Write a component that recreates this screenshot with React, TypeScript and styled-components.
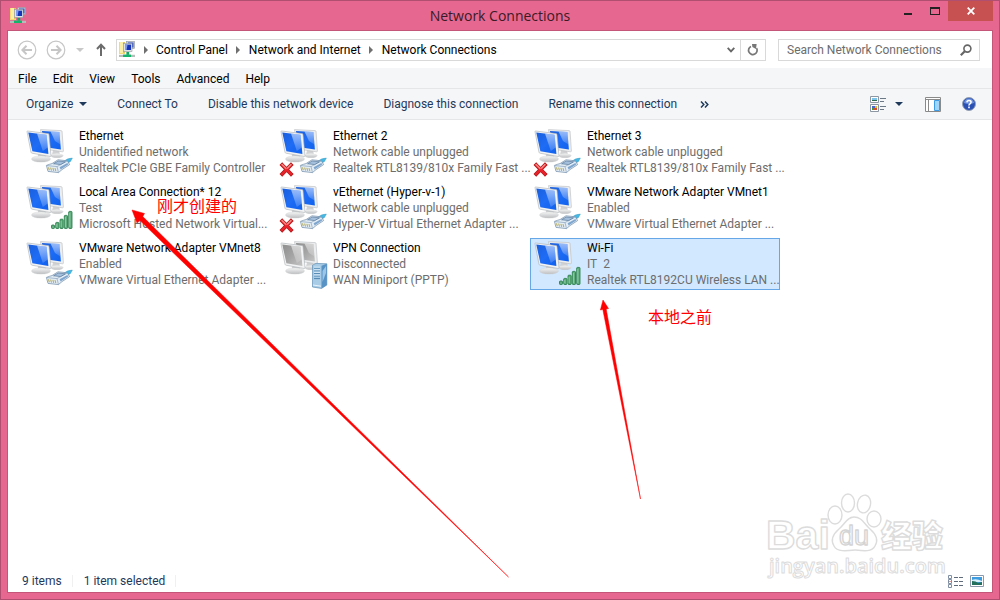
import React from "react";
import styled, { createGlobalStyle } from "styled-components";

const GlobalStyle = createGlobalStyle`
  *, *::before, *::after { box-sizing: border-box; }
  body {
    margin: 0;
    background: #e66790;
    font-family: Roboto, "Noto Sans CJK SC", sans-serif;
    font-size: 12px;
    line-height: 16px;
    color: #000;
  }
  button, input { font: inherit; color: inherit; }
  svg { display: block; flex: none; }
`;

const Frame = styled.div`
  display: flex;
  flex-direction: column;
  min-height: 100vh;
  padding: 0 6px 6px;
  background: #e66790;
  border: 1px solid #b04f70;
`;

const TitleBar = styled.header`
  display: grid;
  grid-template-columns: 1fr auto 1fr;
  align-items: center;
  height: 29px;
`;

const TitleIcon = styled.span`
  padding-left: 3px;
`;

const Title = styled.h1`
  margin: 0;
  font-family: "Open Sans", sans-serif;
  font-size: 14px;
  font-weight: 400;
  line-height: 20px;
  color: #3a1a25;
`;

const WindowControls = styled.div`
  display: flex;
  justify-content: flex-end;
  align-self: start;
`;

const ControlButton = styled.button<{ $close?: boolean }>`
  display: flex;
  align-items: center;
  justify-content: center;
  width: ${(p) => (p.$close ? 45 : 27)}px;
  height: 20px;
  padding: 0;
  border: 0;
  background: ${(p) => (p.$close ? "#c75050" : "transparent")};
`;

const Client = styled.main`
  flex: 1;
  display: flex;
  flex-direction: column;
  border: 1px solid #c4567a;
  background: #fff;
`;

const NavRow = styled.div`
  display: flex;
  align-items: center;
  height: 37px;
  padding: 0 12px 0 8px;
`;

const IconButton = styled.button<{ $width?: number }>`
  display: flex;
  align-items: center;
  justify-content: center;
  width: ${(p) => p.$width ?? 22}px;
  height: 20px;
  flex: none;
  padding: 0;
  border: 0;
  background: none;
`;

const HistoryButtons = styled.div`
  display: flex;
  align-items: center;
  width: 100px;
  flex: none;
`;

const AddressBar = styled.nav`
  flex: 1;
  display: flex;
  align-items: center;
  height: 22px;
  padding-left: 2px;
  border: 1px solid #d9d9d9;
`;

const Crumb = styled.button`
  padding: 0;
  border: 0;
  background: none;
  white-space: nowrap;
`;

const CrumbArrow = styled.span`
  display: flex;
  justify-content: center;
  width: 21px;
`;

const AddressTools = styled.div`
  display: flex;
  margin-left: auto;
`;

const RefreshCell = styled.div`
  border-left: 1px solid #d9d9d9;
`;

const SearchBox = styled.label`
  display: flex;
  align-items: center;
  width: 202px;
  height: 22px;
  margin-left: 12px;
  padding: 0 7px 0 8px;
  border: 1px solid #d9d9d9;
`;

const SearchInput = styled.input`
  flex: 1;
  min-width: 0;
  height: 18px;
  padding: 0;
  border: 0;
  outline: 0;
  background: none;
  &::placeholder { color: #6d6d6d; opacity: 1; }
`;

const MenuBar = styled.nav`
  display: flex;
  align-items: center;
  height: 21px;
  padding: 1px 0 0 2px;
  background: #f5f6f7;
  border-bottom: 1px solid #e5e6e7;
`;

const MenuButton = styled.button`
  padding: 0 8px;
  border: 0;
  background: none;
`;

const CommandBar = styled.div`
  display: flex;
  align-items: center;
  height: 31px;
  padding: 0 10px 0 3px;
  background: #f5f6f7;
  border-bottom: 1px solid #e5e6e7;
`;

const Command = styled.button`
  display: flex;
  align-items: center;
  gap: 6px;
  padding: 0 15px;
  border: 0;
  background: none;
  color: #1e395b;
  white-space: nowrap;
`;

const CommandViews = styled.div`
  display: flex;
  align-items: center;
  margin-left: auto;
`;

const Content = styled.section`
  position: relative;
  flex: 1;
  padding: 6px 14px;
`;

const ConnectionGrid = styled.ul`
  display: grid;
  grid-template-columns: repeat(auto-fill, 250px);
  gap: 4px;
  margin: 0;
  padding: 0;
  list-style: none;
`;

const ConnectionTile = styled.button<{ $selected?: boolean }>`
  display: flex;
  gap: 5px;
  width: 100%;
  height: 52px;
  padding: 0 0 0 1px;
  border: 1px solid ${(p) => (p.$selected ? "#66a7e8" : "transparent")};
  background: ${(p) => (p.$selected ? "#d1e8ff" : "transparent")};
  text-align: left;
`;

const TileText = styled.span`
  display: flex;
  flex-direction: column;
  padding-top: 1px;
  color: #6d6d6d;
  white-space: nowrap;
`;

const TileName = styled.span`
  color: #000;
`;

const Overlay = styled.svg`
  position: absolute;
  left: 0;
  top: 0;
  overflow: visible;
  pointer-events: none;
`;

const Note = styled.span<{ $x: number; $y: number }>`
  position: absolute;
  left: ${(p) => p.$x}px;
  top: ${(p) => p.$y}px;
  font-family: "Noto Sans CJK SC", sans-serif;
  font-size: 16px;
  line-height: 20px;
  color: #f00;
  pointer-events: none;
`;

const Watermark = styled.svg`
  position: absolute;
  right: 42px;
  bottom: -16px;
  pointer-events: none;
`;

const StatusBar = styled.footer`
  display: flex;
  align-items: center;
  height: 22px;
  padding: 0 4px 0 14px;
  color: #1e395b;
`;

const StatusText = styled.span`
  margin-right: 11px;
  padding-right: 10px;
  border-right: 1px solid #f0f0f0;
  line-height: 12px;
`;

const StatusViews = styled.div`
  display: flex;
  margin-left: auto;
`;

function NetworkFolderIcon() {
  return (
    <svg width="16" height="17" viewBox="0 0 16 17">
      <path d="M0 1h5l1 1v11H0z" fill="#f3dc78" />
      <path d="M1 1h3v11H1z" fill="#fbeea6" />
      <path d="M4 1h2v11H4z" fill="#e2c75e" />
      <rect x="7.5" y="0.5" width="8" height="7" fill="#c9cfd4" stroke="#8f979e" strokeWidth="0.6" />
      <rect x="9" y="1.5" width="5.5" height="5" fill="#3b57c9" />
      <rect x="4.5" y="2.5" width="8.5" height="8" fill="#dfe4e8" stroke="#8f979e" strokeWidth="0.6" />
      <rect x="6" y="3.6" width="6" height="5.4" fill="#1534b8" />
      <path d="M6 3.6h2.6L7.6 9H6z" fill="#7e9bf0" />
      <path d="M7.4 11h2.8v3H7.4z" fill="#16a564" />
      <path d="M0 13.8h16v2.2H0z" fill="#b4bdb9" />
      <path d="M4 13.6h8V16H4z" fill="#14b46c" />
    </svg>
  );
}

function CircleArrow({ forward }: { forward?: boolean }) {
  return (
    <svg width="20" height="20" viewBox="0 0 20 20" fill="none" stroke="#c6c6c6">
      <circle cx="10" cy="10" r="8.8" strokeWidth="1.2" />
      <g strokeWidth="2" transform={forward ? "rotate(180 10 10)" : undefined}>
        <path d="M5.5 10H15M9.5 5.8L5.4 10l4.1 4.2" />
      </g>
    </svg>
  );
}

function Caret({ color }: { color: string }) {
  return (
    <svg width="8" height="4" viewBox="0 0 8 4">
      <path d="M0 0h8L4 4z" fill={color} />
    </svg>
  );
}

function ConnectionIcon({ kind }: { kind: Kind }) {
  const grey = kind === "vpn";
  const id = grey ? "grey" : "blue";
  return (
    <svg width="50" height="50" viewBox="0 0 50 50" aria-hidden="true">
      <defs>
        <linearGradient id={`screen-${id}`} x1="0" y1="0" x2="1" y2="1">
          <stop offset="0" stopColor={grey ? "#8e8e8e" : "#1a5fdc"} />
          <stop offset="0.5" stopColor={grey ? "#a4a4a4" : "#1f6cf5"} />
          <stop offset="1" stopColor={grey ? "#c4c4c4" : "#0f62ee"} />
        </linearGradient>
        <linearGradient id={`glare-${id}`} x1="0" y1="0" x2="0" y2="1">
          <stop offset="0" stopColor="#fff" stopOpacity="0.55" />
          <stop offset="1" stopColor="#fff" stopOpacity="0.15" />
        </linearGradient>
        <linearGradient id={`stand-${id}`} x1="0" y1="0" x2="0" y2="1">
          <stop offset="0" stopColor="#f6f6f6" />
          <stop offset="1" stopColor="#bcbec0" />
        </linearGradient>
      </defs>
      <path d="M29 23h6l1 5h-8z" fill="#d0d2d4" />
      <ellipse cx="33" cy="28.6" rx="6.5" ry="2.2" fill={`url(#stand-${id})`} />
      <path d="M16.5 2.6L37 3.6Q38 3.7 38.1 4.6L39.4 24Q39.4 24.9 38.5 24.8L19.5 22z" fill="#eceeef" stroke="#b9bcbf" strokeWidth="0.6" />
      <path d="M18 3.9L35.4 4.9 36.9 22.4 20 20z" fill={`url(#screen-${id})`} />
      <path d="M26.5 4.4L35.4 4.9 36.5 17.5 31 14z" fill={`url(#glare-${id})`} />
      <path d="M14.5 27l7 1 1.5 4H13z" fill="#c9cbcd" />
      <ellipse cx="17" cy="32" rx="9.5" ry="3.1" fill={`url(#stand-${id})`} stroke="#d0d2d4" strokeWidth="0.4" />
      <path d="M3 4.6Q2.9 4 3.7 4L24 6.6Q24.9 6.7 25 7.5L27 28.8Q27 29.6 26.2 29.5L8 26.2Q7.2 26 7 25.3z" fill="#f2f3f4" stroke="#aaaeb1" strokeWidth="0.6" />
      <path d="M4.3 5.5L22.6 7.8 24.4 27 8.4 24.2z" fill={`url(#screen-${id})`} />
      <path d="M13 6.6L22.6 7.8 23.8 20.6 18.8 24z" fill={`url(#glare-${id})`} />
      {(kind === "cable" || kind === "unplugged") && <CableBadge />}
      {kind === "wireless" && <SignalBadge />}
      {kind === "vpn" && <ServerBadge />}
      {kind === "unplugged" && (
        <g fill="none">
          <path d="M4.2 38L13 47M13 38L4.2 47" stroke="#a81a1a" strokeWidth="3.8" strokeLinecap="square" />
          <path d="M4.2 38L13 47M13 38L4.2 47" stroke="#e8222a" strokeWidth="2.6" strokeLinecap="square" />
          <path d="M4 37.4L8 41.4M13 37.4L9.6 41" stroke="#f58a86" strokeWidth="1.4" strokeLinecap="round" />
        </g>
      )}
    </svg>
  );
}

function CableBadge() {
  return (
    <g strokeLinejoin="round">
      <path d="M39 35Q43 31 48.4 31L46.5 34.5Q43.5 36 42 38z" fill="#45b8e4" stroke="#3596c0" strokeWidth="0.4" />
      <path d="M22.4 38.4Q26 37 28 36.6L34 32.8 43.4 33.8 45.6 37.6 38 42.6 34.5 45.6 24 44.4z" fill="#e3edf6" stroke="#6d8aa6" strokeWidth="0.7" />
      <path d="M23 38.6L33 39.6 43.4 33.8M33 39.6L34.5 45.6" fill="none" stroke="#7a96b0" strokeWidth="0.6" />
      <path d="M29.5 36.8L34.2 34 41.4 34.8 36.6 37.6z" fill="#a3bfdc" stroke="#4a6c90" strokeWidth="0.6" />
      <path d="M35.6 40.2L43.4 36 44.2 37.6 36.6 42.6z" fill="#7fa6cf" />
      <path d="M24.5 40.4l.8 2.8M26.7 40.6l.8 3M28.9 40.9l.8 3M31 41.1l.8 3" stroke="#b3aa58" strokeWidth="1" />
    </g>
  );
}

function SignalBadge() {
  return (
    <g fill="#5fae7b" stroke="#1d7343" strokeWidth="0.8">
      <rect x="27.5" y="42" width="3" height="3.5" rx="0.8" />
      <rect x="31.7" y="39.4" width="3.2" height="6.1" rx="0.8" />
      <rect x="36" y="36.2" width="3.2" height="9.3" rx="0.8" />
      <rect x="40.3" y="32.4" width="3.2" height="13.1" rx="0.8" />
      <rect x="44.7" y="28.4" width="3.3" height="17.1" rx="0.8" />
      <path d="M45.8 30v14M41.4 34v10M37.1 38v6M32.8 41v3" stroke="#a5d8b6" strokeWidth="0.7" />
    </g>
  );
}

function ServerBadge() {
  return (
    <g strokeLinejoin="round">
      <path d="M34.5 26.2L38 24.4 48.8 24.8V46L43.5 49.4 34.5 48z" fill="#a8cbe6" stroke="#5f8fb4" strokeWidth="0.7" />
      <path d="M43.5 26.8L48.8 24.8V46L43.5 49.4z" fill="#5792c4" />
      <path d="M44.5 32L48 27v7l-3.5 9z" fill="#9cc6e6" />
      <path d="M36 29.2h6M36 31.8h6M36 34.4h6M36 37h6M36 39.6h6" stroke="#4f86b0" strokeWidth="1" />
      <path d="M36 28.2h6M36 30.8h6M36 33.4h6M36 36h6" stroke="#e6f3fc" strokeWidth="0.8" />
      <path d="M35 46l8 1.2" stroke="#e6f3fc" />
    </g>
  );
}

function PawWatermark() {
  return (
    <Watermark width="184" height="94" viewBox="0 0 184 94" role="img" aria-label="Baidu">
      <g fill="#fff" stroke="#dcdcdc" strokeWidth="1.4" strokeLinejoin="round">
        <text x="0" y="57" fontFamily="Liberation Sans, sans-serif" fontWeight="700" fontSize="41">Bai</text>
        <ellipse cx="69" cy="23" rx="7" ry="9" />
        <ellipse cx="82" cy="11" rx="6.5" ry="9" />
        <ellipse cx="98" cy="12" rx="6.5" ry="9" transform="rotate(12 98 12)" />
        <ellipse cx="108" cy="27" rx="7" ry="8" />
        <path d="M88 25C96 25 98 32 104 37C111 43 112 49 109 54C106 60 98 59 89 58C80 59 71 60 68 54C65 49 66 43 73 37C79 32 81 25 88 25z" />
        <text x="73" y="53" fontFamily="Liberation Sans, sans-serif" fontSize="27" stroke="#d4d4d4">du</text>
        <text x="115" y="55" fontFamily="Noto Sans CJK SC, sans-serif" fontWeight="900" fontSize="31">经验</text>
        <text x="3" y="81" fontFamily="Open Sans, sans-serif" fontSize="20" fontWeight="600" strokeWidth="1">jingyan.baidu.com</text>
      </g>
    </Watermark>
  );
}

type Kind = "cable" | "unplugged" | "wireless" | "vpn";

interface Connection {
  name: string;
  status: string;
  device: string;
  kind: Kind;
  selected?: boolean;
}

const connections: Connection[] = [
  { name: "Ethernet", status: "Unidentified network", device: "Realtek PCIe GBE Family Controller", kind: "cable" },
  { name: "Ethernet 2", status: "Network cable unplugged", device: "Realtek RTL8139/810x Family Fast ...", kind: "unplugged" },
  { name: "Ethernet 3", status: "Network cable unplugged", device: "Realtek RTL8139/810x Family Fast ...", kind: "unplugged" },
  { name: "Local Area Connection* 12", status: "Test", device: "Microsoft Hosted Network Virtual...", kind: "wireless" },
  { name: "vEthernet (Hyper-v-1)", status: "Network cable unplugged", device: "Hyper-V Virtual Ethernet Adapter ...", kind: "unplugged" },
  { name: "VMware Network Adapter VMnet1", status: "Enabled", device: "VMware Virtual Ethernet Adapter ...", kind: "cable" },
  { name: "VMware Network Adapter VMnet8", status: "Enabled", device: "VMware Virtual Ethernet Adapter ...", kind: "cable" },
  { name: "VPN Connection", status: "Disconnected", device: "WAN Miniport (PPTP)", kind: "vpn" },
  { name: "Wi-Fi", status: "IT\u00a0 2", device: "Realtek RTL8192CU Wireless LAN ...", kind: "wireless", selected: true },
];

const crumbs = ["Control Panel", "Network and Internet", "Network Connections"];
const menus = ["File", "Edit", "View", "Tools", "Advanced", "Help"];
const commands = ["Connect To", "Disable this network device", "Diagnose this connection", "Rename this connection"];

export default function App() {
  return (
    <>
      <GlobalStyle />
      <Frame>
        <TitleBar>
          <TitleIcon><NetworkFolderIcon /></TitleIcon>
          <Title>Network Connections</Title>
          <WindowControls>
            <ControlButton aria-label="Minimize">
              <svg width="10" height="10" viewBox="0 0 10 10"><path d="M1 7h8v2H1z" fill="#222" /></svg>
            </ControlButton>
            <ControlButton aria-label="Maximize">
              <svg width="10" height="8" viewBox="0 0 10 8"><path d="M0 0h10v8H0zM1 2v5h8V2z" fillRule="evenodd" fill="#222" /></svg>
            </ControlButton>
            <ControlButton $close aria-label="Close">
              <svg width="8" height="8" viewBox="0 0 8 8"><path d="M.7.7l6.6 6.6M7.3.7L.7 7.3" stroke="#fff" strokeWidth="1.8" /></svg>
            </ControlButton>
          </WindowControls>
        </TitleBar>
        <Client>
          <NavRow>
            <HistoryButtons>
              <IconButton aria-label="Back"><CircleArrow /></IconButton>
              <IconButton $width={36} aria-label="Forward"><CircleArrow forward /></IconButton>
              <IconButton $width={12} aria-label="Recent locations"><Caret color="#c8c8c8" /></IconButton>
              <IconButton $width={30} aria-label="Up">
                <svg width="10" height="13" viewBox="0 0 10 13"><path d="M5 13V2M1 6l4-4.2L9 6" fill="none" stroke="#6b6b6b" strokeWidth="2" /></svg>
              </IconButton>
            </HistoryButtons>
            <AddressBar aria-label="Address">
              <NetworkFolderIcon />
              {crumbs.map((crumb) => (
                <React.Fragment key={crumb}>
                  <CrumbArrow>
                    <svg width="4" height="8" viewBox="0 0 4 8"><path d="M0 0l4 4-4 4z" fill="#6f6f6f" /></svg>
                  </CrumbArrow>
                  <Crumb>{crumb}</Crumb>
                </React.Fragment>
              ))}
              <AddressTools>
                <IconButton $width={18} aria-label="Previous locations">
                  <svg width="8" height="6" viewBox="0 0 8 6"><path d="M.7.8L4 4.4 7.3.8" fill="none" stroke="#666" strokeWidth="1.8" /></svg>
                </IconButton>
                <RefreshCell>
                  <IconButton $width={24} aria-label="Refresh">
                    <svg width="12" height="12" viewBox="0 0 12 12">
                      <path d="M4 2.4A4.3 4.3 0 1 0 9.6 4.2" fill="none" stroke="#777" strokeWidth="1.7" />
                      <path d="M5 0l4.6 0-.6 5L5.4 3z" fill="#777" />
                    </svg>
                  </IconButton>
                </RefreshCell>
              </AddressTools>
            </AddressBar>
            <SearchBox>
              <SearchInput type="search" aria-label="Search" placeholder="Search Network Connections" />
              <svg width="12" height="12" viewBox="0 0 12 12" fill="none" stroke="#666">
                <circle cx="7.4" cy="4.6" r="3.5" strokeWidth="1.6" />
                <path d="M4.8 7.2L.8 11.2" strokeWidth="2.2" />
              </svg>
            </SearchBox>
          </NavRow>
          <MenuBar>
            {menus.map((menu) => <MenuButton key={menu}>{menu}</MenuButton>)}
          </MenuBar>
          <CommandBar>
            <Command>Organize <Caret color="#1e395b" /></Command>
            {commands.map((command) => <Command key={command}>{command}</Command>)}
            <IconButton $width={24} aria-label="More commands">
              <svg width="9" height="7" viewBox="0 0 9 7"><path d="M1 .6l2.8 2.9L1 6.4M5 .6l2.8 2.9L5 6.4" fill="none" stroke="#1e395b" strokeWidth="1.5" /></svg>
            </IconButton>
            <CommandViews>
              <IconButton $width={20} aria-label="Change view">
                <svg width="17" height="16" viewBox="0 0 17 16">
                  <path d="M.5.5h8v6h-8zM.5 8.5h8v7h-8z" fill="#fff" stroke="#8d97a3" />
                  <path d="M2 2h5v2H2z" fill="#7cc4ea" /><path d="M2 4h5v1H2z" fill="#2d6a50" />
                  <path d="M2 10h3v2H2z" fill="#4a68c8" /><path d="M5 10h2v2H5z" fill="#e6b92e" />
                  <path d="M2 12h2v2H2z" fill="#3f9a48" /><path d="M4 12h3v2H4z" fill="#d84a2c" />
                  <path d="M10 2.5h6M10 5.5h4M10 10.5h6M10 13.5h4" stroke="#6c7886" />
                </svg>
              </IconButton>
              <IconButton $width={22} aria-label="View options"><Caret color="#1e395b" /></IconButton>
              <IconButton $width={46} aria-label="Preview pane">
                <svg width="16" height="15" viewBox="0 0 16 15">
                  <path d="M.5.5h15v14H.5z" fill="#fff" stroke="#8a8a8a" />
                  <path d="M1 2.5h14M3.5 3v11" stroke="#8a8a8a" />
                  <path d="M9.5 3.5h5v10h-5z" fill="#9fd4fb" stroke="#3d9be6" />
                </svg>
              </IconButton>
              <IconButton $width={26} aria-label="Help">
                <svg width="14" height="14" viewBox="0 0 14 14">
                  <circle cx="7" cy="7" r="6.5" fill="#2b50b4" stroke="#96a0b2" />
                  <path d="M2 6a5 4.4 0 0 1 10 0q-5 2-10 0z" fill="#6f93e0" />
                  <path d="M4.9 5.4Q5 3.4 7 3.4T9.1 5.1Q9.1 6.2 8 6.8T7 8.6" fill="none" stroke="#fff" strokeWidth="1.5" />
                  <path d="M6.2 9.6h1.6v1.6H6.2z" fill="#fff" />
                </svg>
              </IconButton>
            </CommandViews>
          </CommandBar>
          <Content>
            <ConnectionGrid>
              {connections.map((c) => (
                <li key={c.name}>
                  <ConnectionTile $selected={c.selected} aria-pressed={!!c.selected}>
                    <ConnectionIcon kind={c.kind} />
                    <TileText>
                      <TileName>{c.name}</TileName>
                      <span>{c.status}</span>
                      <span>{c.device}</span>
                    </TileText>
                  </ConnectionTile>
                </li>
              ))}
            </ConnectionGrid>
            <Overlay width="640" height="460" viewBox="0 0 640 460" aria-hidden="true">
              <g fill="#f00" stroke="#f00" strokeWidth="0.5">
                <path d="M124 90L136.5 93.5 134.8 96.6 500.5 457 132 100.6 129 103z" />
                <path d="M595 180L600.5 188.5 598.2 189 632.5 379 594.8 189.5 592.4 190z" />
              </g>
            </Overlay>
            <Note $x={149} $y={75}>刚才创建的</Note>
            <Note $x={640} $y={186}>本地之前</Note>
            <PawWatermark />
          </Content>
          <StatusBar>
            <StatusText>9 items</StatusText>
            <StatusText>1 item selected</StatusText>
            <StatusViews>
              <IconButton aria-label="Details view">
                <svg width="15" height="13" viewBox="0 0 15 13">
                  <path d="M.5.5h3v3h-3zM.5 4.5h3v4h-3zM.5 9.5h3v3h-3z" fill="#fff" stroke="#8090a4" />
                  <path d="M1.5 6h1v1h-1z" fill="#c33" />
                  <path d="M6 2.5h4M11 2.5h4M6 6.5h4M11 6.5h4M6 10.5h4M11 10.5h4" stroke="#5f6b7a" />
                </svg>
              </IconButton>
              <IconButton aria-label="Large icons view">
                <svg width="14" height="12" viewBox="0 0 14 12">
                  <path d="M.5.5h13v11H.5z" fill="#fff" stroke="#8a99ab" />
                  <path d="M2 2h10v8H2z" fill="#3d9be0" /><path d="M2 5q4-2 10 1v1H2z" fill="#d6effa" />
                  <path d="M2 6q4 0 6 2l4-1v3H2z" fill="#23705c" />
                </svg>
              </IconButton>
            </StatusViews>
          </StatusBar>
        </Client>
      </Frame>
    </>
  );
}
